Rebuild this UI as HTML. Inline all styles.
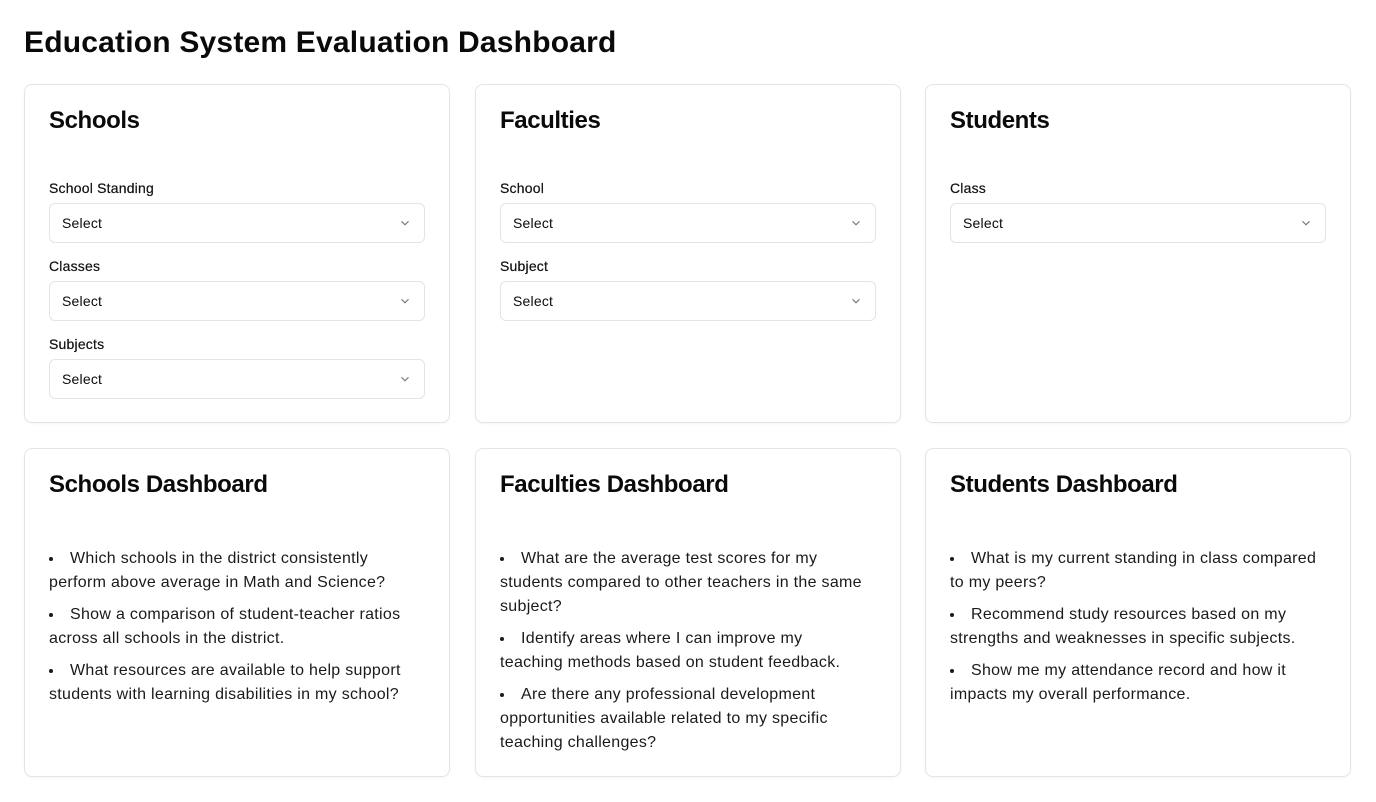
<!DOCTYPE html>
<html><head><style>
*{box-sizing:border-box;margin:0;padding:0}
body{width:1376px;height:802px;background:#fff;font-family:"Liberation Sans",sans-serif;color:#0a0a0a;position:relative;overflow:hidden}
h1{position:absolute;left:24px;top:25px;font-size:30px;font-weight:700;line-height:36px;letter-spacing:0.2px}
.card{position:absolute;width:426px;border:1px solid #e4e4e7;border-radius:8px;padding:0 24px;box-shadow:0 1px 2px rgba(0,0,0,.04)}
.r1{top:84px;height:339px}.r2{top:448px;height:329px}
.c1{left:24px}.c2{left:475px}.c3{left:925px}
h2{font-size:24px;font-weight:700;line-height:32px;margin-top:20px;letter-spacing:-0.4px}
.lbl{font-size:14px;font-weight:400;line-height:20px;color:#111;letter-spacing:0.2px;-webkit-text-stroke:0.2px #111}
.first{margin-top:41px}
.sel{height:40px;border:1px solid #e4e4e7;border-radius:6px;margin-top:5px;margin-bottom:13px;display:flex;align-items:center;justify-content:space-between;padding:0 12px;font-size:14px;letter-spacing:0.2px}
ul{list-style:inside disc;margin-top:46px;font-size:16px;line-height:24px;color:#1a1a1a;letter-spacing:0.3px}
li{margin-bottom:8px}
</style></head><body>
<h1>Education System Evaluation Dashboard</h1>
<div class="card r1 c1"><h2>Schools</h2>
<div class="lbl first">School Standing</div><div class="sel">Select<svg width="14" height="14" viewBox="0 0 24 24" fill="none" stroke="#777" stroke-width="2"><path d="M6 9l6 6 6-6"/></svg></div>
<div class="lbl">Classes</div><div class="sel">Select<svg width="14" height="14" viewBox="0 0 24 24" fill="none" stroke="#777" stroke-width="2"><path d="M6 9l6 6 6-6"/></svg></div>
<div class="lbl">Subjects</div><div class="sel">Select<svg width="14" height="14" viewBox="0 0 24 24" fill="none" stroke="#777" stroke-width="2"><path d="M6 9l6 6 6-6"/></svg></div>
</div>
<div class="card r1 c2"><h2>Faculties</h2>
<div class="lbl first">School</div><div class="sel">Select<svg width="14" height="14" viewBox="0 0 24 24" fill="none" stroke="#777" stroke-width="2"><path d="M6 9l6 6 6-6"/></svg></div>
<div class="lbl">Subject</div><div class="sel">Select<svg width="14" height="14" viewBox="0 0 24 24" fill="none" stroke="#777" stroke-width="2"><path d="M6 9l6 6 6-6"/></svg></div>
</div>
<div class="card r1 c3"><h2>Students</h2>
<div class="lbl first">Class</div><div class="sel">Select<svg width="14" height="14" viewBox="0 0 24 24" fill="none" stroke="#777" stroke-width="2"><path d="M6 9l6 6 6-6"/></svg></div>
</div>
<div class="card r2 c1"><h2>Schools Dashboard</h2><ul>
<li>Which schools in the district consistently<br>perform above average in Math and Science?</li>
<li>Show a comparison of student-teacher ratios<br>across all schools in the district.</li>
<li>What resources are available to help support<br>students with learning disabilities in my school?</li></ul></div>
<div class="card r2 c2"><h2>Faculties Dashboard</h2><ul>
<li>What are the average test scores for my<br>students compared to other teachers in the same<br>subject?</li>
<li>Identify areas where I can improve my<br>teaching methods based on student feedback.</li>
<li>Are there any professional development<br>opportunities available related to my specific<br>teaching challenges?</li></ul></div>
<div class="card r2 c3"><h2>Students Dashboard</h2><ul>
<li>What is my current standing in class compared<br>to my peers?</li>
<li>Recommend study resources based on my<br>strengths and weaknesses in specific subjects.</li>
<li>Show me my attendance record and how it<br>impacts my overall performance.</li></ul></div>
</body></html>
